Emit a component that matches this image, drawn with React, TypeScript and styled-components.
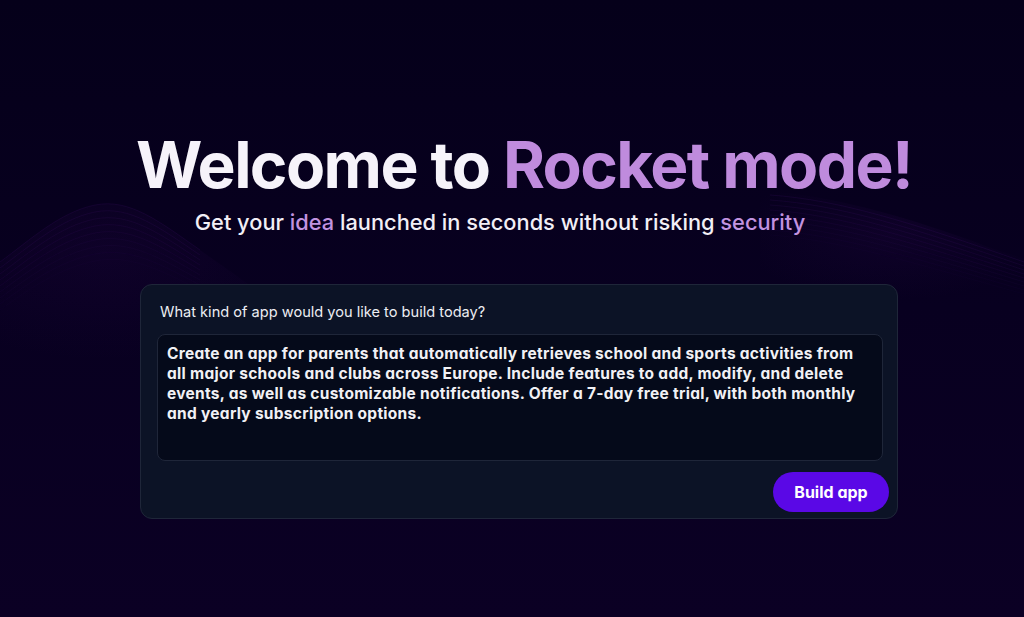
import React from "react";
import styled, { createGlobalStyle } from "styled-components";

const Global = createGlobalStyle`
  html, body { margin: 0; padding: 0; }
  body {
    background: #06001a;
    font-family: Inter, "Noto Sans", sans-serif;
    -webkit-font-smoothing: antialiased;
  }
`;

const Page = styled.main`
  position: relative;
  width: 1024px;
  height: 617px;
  overflow: hidden;
  display: flex;
  flex-direction: column;
  align-items: center;
  padding-top: 126px;
  box-sizing: border-box;
  background: linear-gradient(180deg, #05001a 0%, #080020 50%, #0b0024 100%);
`;

const Waves = styled.svg`
  position: absolute;
  inset: 0;
  pointer-events: none;
`;

const Title = styled.h1`
  margin: 0;
  font-size: 64px;
  line-height: 77px;
  font-weight: 700;
  letter-spacing: -1.6px;
  color: #f6f3fa;
  margin-left: 24px;
  position: relative;
`;

const Accent = styled.span`
  color: #bf8bdd;
`;

const Subtitle = styled.p`
  margin: 5px 0 0;
  font-size: 21.8px;
  line-height: 28.6px;
  font-weight: 500;
  color: #f2eff6;
  margin-right: 24px;
  position: relative;
`;

const SoftAccent = styled.span`
  color: #c293e0;
`;

const Card = styled.section`
  position: relative;
  margin-top: 47px;
  margin-left: 14px;
  width: 758px;
  height: 235px;
  box-sizing: border-box;
  background: #0c1326;
  border: 1px solid #1f2639;
  border-radius: 12px;
  padding: 17px 14px 0 16px;
  display: flex;
  flex-direction: column;
`;

const Label = styled.label`
  font-size: 14.6px;
  line-height: 20px;
  color: #eceef3;
  padding-left: 3px;
`;

const Prompt = styled.textarea`
  margin-top: 12px;
  width: 726px;
  height: 127px;
  box-sizing: border-box;
  resize: none;
  background: #050a1a;
  border: 1px solid #1f2639;
  border-radius: 8px;
  padding: 9px 17px 9px 9px;
  color: #f1f1f5;
  font-family: Inter, "Noto Sans", sans-serif;
  font-feature-settings: "cv11" 1;
  font-weight: 700;
  font-size: 15.5px;
  line-height: 20.3px;
  letter-spacing: 0.28px;
  outline: none;
`;

const Actions = styled.div`
  display: flex;
  justify-content: flex-end;
  margin-top: 11px;
  margin-right: -6px;
`;

const BuildButton = styled.button`
  width: 116px;
  height: 40px;
  border: none;
  border-radius: 20px;
  background: #5a08e6;
  color: #ffffff;
  font-family: Inter, "Noto Sans", sans-serif;
  font-feature-settings: "cv11" 1;
  font-weight: 700;
  font-size: 16px;
  cursor: pointer;
`;

const promptText =
  "Create an app for parents that automatically retrieves school and sports activities from all major schools and clubs across Europe. Include features to add, modify, and delete events, as well as customizable notifications. Offer a 7-day free trial, with both monthly and yearly subscription options.";

const meshLines = Array.from({ length: 9 }, (_, i) => i);

export default function App() {
  return (
    <>
      <Global />
      <Page>
        <Waves width="1024" height="617" viewBox="0 0 1024 617">
          <defs>
            <radialGradient id="gl" cx="0.35" cy="0.3" r="0.7">
              <stop offset="0" stopColor="#3e0c66" stopOpacity="0.14" />
              <stop offset="1" stopColor="#3e0c66" stopOpacity="0" />
            </radialGradient>
            <radialGradient id="gr" cx="0.5" cy="0.4" r="0.6">
              <stop offset="0" stopColor="#3e0c66" stopOpacity="0.14" />
              <stop offset="1" stopColor="#3e0c66" stopOpacity="0" />
            </radialGradient>
          </defs>
          <path d="M0 262 C 30 240, 60 212, 95 205 C 130 198, 160 222, 200 250 C 240 278, 270 300, 300 320 L 300 360 L 0 360 Z" fill="url(#gl)" />
          {meshLines.map((i) => (
            <path
              key={`l${i}`}
              d={`M0 ${262 + i * 6} C 30 ${240 + i * 6}, 60 ${212 + i * 7}, 95 ${205 + i * 7} C 130 ${198 + i * 7}, 160 ${222 + i * 6}, 200 ${250 + i * 5}`}
              stroke="#5c1a90"
              strokeOpacity={0.13 - i * 0.012}
              strokeWidth="1"
              fill="none"
            />
          ))}
          <path d="M760 190 C 830 195, 900 215, 970 240 C 995 250, 1012 255, 1024 258 L 1024 300 L 760 300 Z" fill="url(#gr)" />
          {meshLines.map((i) => (
            <path
              key={`r${i}`}
              d={`M770 ${195 + i * 5} C 840 ${200 + i * 5}, 910 ${222 + i * 5}, 1024 ${262 + i * 4}`}
              stroke="#5c1a90"
              strokeOpacity={0.13 - i * 0.012}
              strokeWidth="1"
              fill="none"
            />
          ))}
        </Waves>
        <Title>
          Welcome to <Accent>Rocket mode!</Accent>
        </Title>
        <Subtitle>
          Get your <SoftAccent>idea</SoftAccent> launched in seconds without risking{" "}
          <SoftAccent>security</SoftAccent>
        </Subtitle>
        <Card>
          <Label htmlFor="prompt">What kind of app would you like to build today?</Label>
          <Prompt id="prompt" readOnly value={promptText} />
          <Actions>
            <BuildButton type="button">Build app</BuildButton>
          </Actions>
        </Card>
      </Page>
    </>
  );
}
